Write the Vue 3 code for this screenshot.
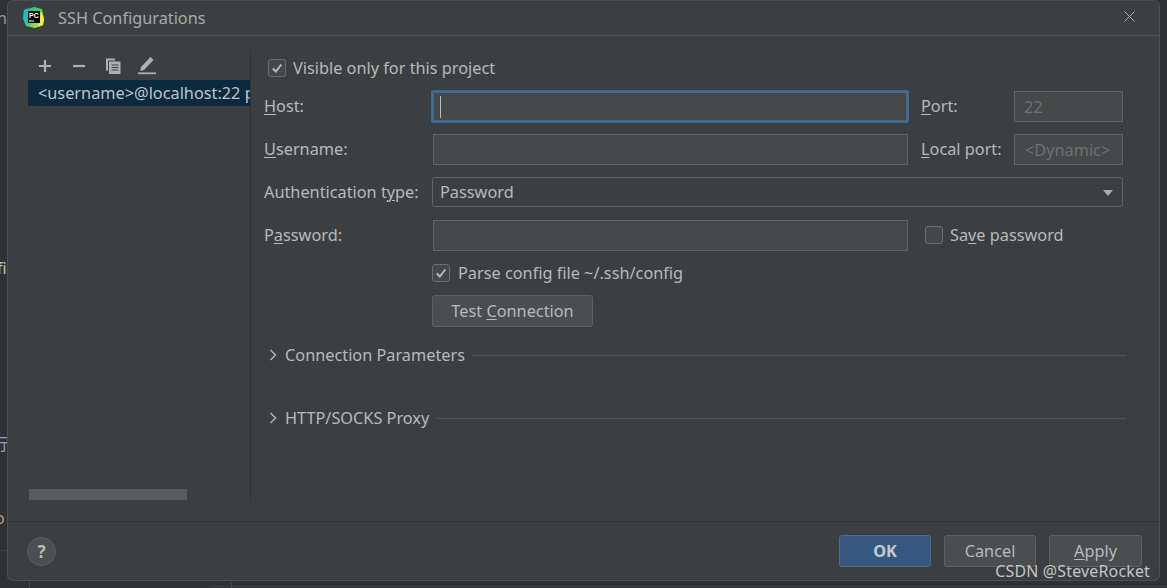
<script setup>
const title = 'SSH Configurations'
</script>

<template>
  <div class="screen">
    <div class="behind">
      <span class="frag f1">n</span>
      <span class="frag f2">fi</span>
      <span class="frag f3">行</span>
      <span class="frag f4">o</span>
      <i class="hline l1"></i>
      <i class="hline l2"></i>
      <i class="vline v1"></i>
      <i class="vline v2"></i>
    </div>

    <div class="dialog">
      <header class="titlebar">
        <svg class="logo" width="21" height="21" viewBox="0 0 21 21">
          <defs>
            <linearGradient id="pc1" x1="0" y1="0" x2="1" y2="1">
              <stop offset="0" stop-color="#1fb8a8" />
              <stop offset="0.5" stop-color="#3bd65a" />
              <stop offset="1" stop-color="#e8ee4a" />
            </linearGradient>
          </defs>
          <path d="M1 3 L11 0 L19 2 L21 12 L20 18 L12 21 L3 19 L0 11 Z" fill="url(#pc1)" />
          <path d="M0 11 L1 3 L5 1 L5 17 L3 19 Z" fill="#19b8d8" opacity=".7" />
          <path d="M18 4 L21 12 L20 18 L15 20 Z" fill="#f2ea3f" />
          <rect x="5" y="4" width="12" height="12" fill="#000" />
          <text x="6" y="10.5" class="logotext">PC</text>
          <rect x="6" y="13.5" width="5" height="1" fill="#fff" />
        </svg>
        <span class="title">{{ title }}</span>
        <svg class="close" width="11" height="11" viewBox="0 0 11 11">
          <path d="M.5.5l10 10M10.5.5l-10 10" stroke="#a8aaab" stroke-width="1" fill="none" />
        </svg>
      </header>

      <main class="content">
        <aside class="sidebar">
          <div class="toolbar">
            <svg width="14" height="14" viewBox="0 0 14 14"><path d="M7 1v12M1 7h12" stroke="#afb1b3" stroke-width="2.2" /></svg>
            <svg width="14" height="14" viewBox="0 0 14 14"><path d="M1 7h12" stroke="#afb1b3" stroke-width="2.2" /></svg>
            <svg width="16" height="16" viewBox="0 0 16 16">
              <path d="M1 .5h9v2H3v10H1z" fill="#afb1b3" />
              <path d="M4 3.5h11.5V16H4z" fill="#afb1b3" />
              <path d="M6.5 7h7M6.5 9.5h7M6.5 12h7" stroke="#3c3f41" stroke-width="1.2" />
            </svg>
            <svg width="18" height="18" viewBox="0 0 18 18">
              <path d="M3 12.5L12.5 2.5l3 3-9.5 10-3.8 1z" fill="#afb1b3" transform="translate(0 -2.5)" />
              <path d="M0 16.3h18" stroke="#afb1b3" stroke-width="1.8" />
            </svg>
          </div>
          <div class="selected">&lt;username&gt;@localhost:22 password</div>
          <div class="scroll-wrap"><div class="scrollbar"></div></div>
        </aside>

        <section class="panel">
          <label class="check-row top">
            <span class="box checked"><svg width="14" height="14" viewBox="0 0 14 14"><path d="M2.8 7.5l3 3 5.5-7" stroke="#b8babb" stroke-width="2" fill="none" /></svg></span>
            Visible only for this project
          </label>

          <div class="form">
            <span class="lbl"><u>H</u>ost:</span>
            <div class="input focus"><i class="caret"></i></div>
            <span class="lbl second"><u>P</u>ort:</span>
            <div class="input dis">22</div>

            <span class="lbl"><u>U</u>sername:</span>
            <div class="input wide"></div>
            <span class="lbl second"><u>L</u>ocal port:</span>
            <div class="input dis dyn">&lt;Dynamic&gt;</div>

            <span class="lbl">Authentication t<u>y</u>pe:</span>
            <div class="input select">Password<i class="arrow"></i></div>

            <span class="lbl">P<u>a</u>ssword:</span>
            <div class="input wide"></div>
            <label class="save">
              <span class="box"></span>
              <span>Sa<u>v</u>e password</span>
            </label>
          </div>

          <div class="under">
            <label class="check-row parse">
              <span class="box checked"><svg width="14" height="14" viewBox="0 0 14 14"><path d="M2.8 7.5l3 3 5.5-7" stroke="#b8babb" stroke-width="2" fill="none" /></svg></span>
              Parse config file ~/.ssh/config
            </label>
            <button class="btn test">Test <u>C</u>onnection</button>
          </div>

          <div class="group first">
            <svg width="8" height="12" viewBox="0 0 8 12"><path d="M1.5 1l5 5-5 5" stroke="#afb1b3" stroke-width="1.5" fill="none" /></svg>
            <span>Connection Parameters</span><i class="rule"></i>
          </div>
          <div class="group second-group">
            <svg width="8" height="12" viewBox="0 0 8 12"><path d="M1.5 1l5 5-5 5" stroke="#afb1b3" stroke-width="1.5" fill="none" /></svg>
            <span>HTTP/SOCKS Proxy</span><i class="rule"></i>
          </div>
        </section>
      </main>

      <footer class="footer">
        <div class="help">?</div>
        <div class="actions">
          <button class="btn ok">OK</button>
          <button class="btn">Cancel</button>
          <button class="btn apply"><u>A</u>pply</button>
        </div>
      </footer>
    </div>

    <div class="watermark">CSDN @SteveRocket</div>
  </div>
</template>

<style>
html, body { margin: 0; background: #2b2d2f; overflow: hidden; }
</style>

<style scoped>
* { box-sizing: border-box; }
.screen {
  position: relative;
  width: 1167px;
  height: 588px;
  overflow: hidden;
  padding: 0 7px 7px 7px;
  background: #2f3133;
  font-family: "Noto Sans", "Open Sans", sans-serif;
  font-size: 16.3px;
  color: #b8babb;
}
.behind { position: absolute; inset: 0; }
.frag { position: absolute; font-size: 16px; line-height: 20px; color: #a9b7c6; }
.f1 { left: -3px; top: 8px; color: #9a9c9d; }
.f2 { left: -3px; top: 258px; color: #a5d6a7; }
.f3 { left: -8px; top: 433px; font-family: "Noto Sans CJK SC", sans-serif; color: #8fa8bd; }
.f4 { left: -5px; top: 508px; color: #a9a08e; }
.hline { position: absolute; height: 1px; background: #3f4244; }
.l1 { left: 0; width: 8px; top: 550px; }
.l2 { left: 210px; width: 957px; top: 586px; }
.vline { position: absolute; width: 1px; top: 582px; height: 6px; background: #45484a; }
.v1 { left: 29px; }
.v2 { left: 231px; }

.dialog {
  position: relative;
  height: 581px;
  width: 1153px;
  display: flex;
  flex-direction: column;
  background: #3c3f41;
  border: 1px solid #4e5153;
  border-top-color: #4a4d4f;
  border-radius: 6px;
}
.titlebar {
  height: 35px;
  flex: none;
  display: flex;
  align-items: center;
  padding: 0 24px 0 15px;
  border-bottom: 1px solid #505355;
}
.logo { flex: none; margin-top: -1px; }
.logotext { font-family: "Liberation Sans", sans-serif; font-size: 7px; font-weight: 700; fill: #fff; }
.title { margin-left: 14px; font-size: 16.3px; color: #a9abac; margin-top: -1px; }
.close { margin-left: auto; margin-top: -3px; }

.content { flex: 1; display: flex; min-height: 0; }
.sidebar {
  width: 243px;
  flex: none;
  margin: 15px 0 21px;
  border-right: 1px solid #313335;
  display: flex;
  flex-direction: column;
  padding-left: 20px;
}
.toolbar { height: 29px; display: flex; align-items: center; gap: 20px; padding-left: 10px; }
.toolbar svg:nth-child(3) { margin-left: -1px; }
.toolbar svg:nth-child(4) { margin-left: -3px; }
.selected {
  height: 26px;
  line-height: 26px;
  padding-left: 10px;
  background: #0d293e;
  color: #bcc5cc;
  white-space: nowrap;
  overflow: hidden;
}
.scroll-wrap { margin-top: auto; padding: 0 0 0 1px; }
.scrollbar { width: 158px; height: 11px; background: #595b5d; }

.panel { flex: 1; min-width: 0; padding: 20px 36px 0 13px; }
.check-row { display: flex; align-items: center; gap: 7px; height: 24px; }
.top { padding-left: 4px; }
.box {
  width: 18px;
  height: 18px;
  flex: none;
  display: flex;
  align-items: center;
  justify-content: center;
  border: 1px solid #6b6e70;
  border-radius: 3px;
  background: #43494a;
}
.form {
  margin-top: 11px;
  display: grid;
  grid-template-columns: 168px 476px 106px 109px;
  grid-auto-rows: 31px;
  row-gap: 12px;
  align-items: center;
}
.lbl { white-space: nowrap; margin-top: -1px; }
.second { padding-left: 13px; }
u { text-underline-offset: 2px; text-decoration-thickness: 1px; }
.input {
  height: 31px;
  border: 1px solid #646464;
  background: #45494a;
  display: flex;
  align-items: center;
  padding-left: 7px;
}
.wide { margin-left: 1px; width: 475px; }
.focus {
  border: 3px solid #3f6a94;
  border-radius: 2px;
  width: 478px;
  height: 33px;
  margin-left: -1px;
  padding-left: 6px;
}
.caret { width: 1px; height: 22px; background: #bbb; }
.dis { color: #6f7173; padding-left: 9px; }
.dyn { padding-left: 10px; white-space: nowrap; font-size: 16.3px; }
.select {
  grid-column: 2 / 5;
  position: relative;
  height: 30px;
  margin-top: -2px;
  background: #3c3f41;
  border-radius: 3px;
  padding-left: 7px;
}
.arrow {
  position: absolute;
  right: 9px;
  top: 12px;
  width: 0;
  height: 0;
  border-left: 5px solid transparent;
  border-right: 5px solid transparent;
  border-top: 6px solid #a9abac;
}
.save { grid-column: 3 / 5; display: flex; align-items: center; gap: 7px; padding-left: 17px; white-space: nowrap; margin-top: -1px; }
.under { padding-left: 168px; margin-top: 10px; }
.parse { height: 24px; gap: 8px; }
.btn {
  width: 92px;
  height: 32px;
  padding: 0;
  font: inherit;
  color: #b8babb;
  background: #4a4e50;
  border: 1px solid #5e6162;
  border-radius: 3px;
}
.test { display: block; margin-top: 10px; width: 161px; }
.group { display: flex; align-items: center; height: 24px; }
.group svg { margin: 0 8px 0 5px; flex: none; }
.group span { white-space: nowrap; }
.rule { flex: 1; height: 1px; background: #515456; margin: 0 -3px 0 7px; }
.first { margin-top: 16px; }
.second-group { margin-top: 39px; }

.footer {
  height: 59px;
  flex: none;
  display: flex;
  align-items: center;
  padding: 0 17px 0 19px;
  border-top: 1px solid #313335;
}
.help {
  width: 29px;
  height: 29px;
  border-radius: 50%;
  background: #4b4f51;
  border: 1px solid #5c5f60;
  color: #b8babb;
  font-weight: 700;
  font-size: 17px;
  display: flex;
  align-items: center;
  justify-content: center;
}
.actions { margin-left: auto; display: flex; gap: 13px; }
.apply { width: 93px; }
.ok { background: #365880; border-color: #4c708c; color: #c3cad0; font-weight: 700; }

.watermark {
  position: absolute;
  right: 17px;
  top: 561px;
  font-size: 15.9px;
  line-height: 20px;
  color: #c4c6c7;
  letter-spacing: .2px;
}
</style>
